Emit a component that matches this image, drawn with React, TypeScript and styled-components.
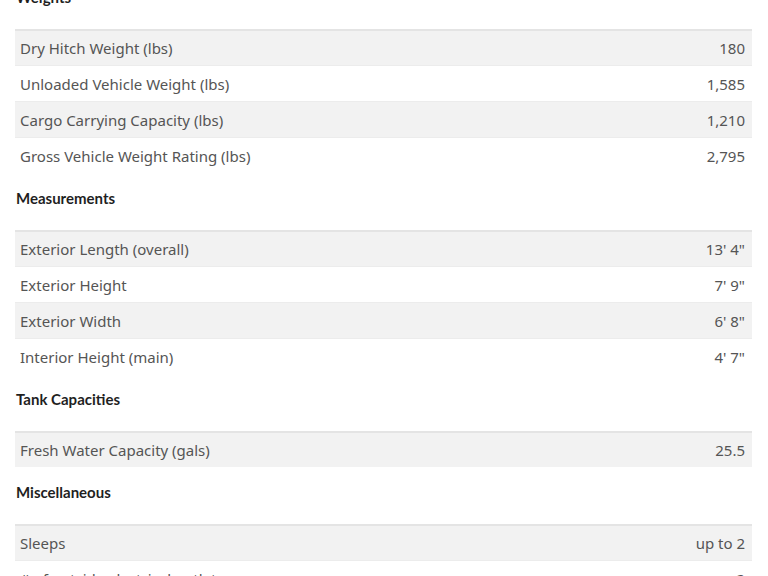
import * as React from "react";
import styled, { createGlobalStyle } from "styled-components";

const GlobalStyle = createGlobalStyle`
    body {
        margin: 0;
        background: #fff;
        font-family: "Noto Sans", "Open Sans", sans-serif;
    }
`;

const Page = styled.div`
    margin-top: -28px;
    padding: 0 16px 0 15px;
`;

const Section = styled.section`
    display: flow-root;
`;

const Heading = styled.h3`
    margin: 15px 0 22px 1px;
    font-family: Lato, "Noto Sans", sans-serif;
    font-weight: 700;
    font-size: 15px;
    line-height: 20px;
    color: #1f1f1f;
`;

const Table = styled.div`
    border-top: 2px solid #e4e4e4;
`;

const Row = styled.div<{ $shaded: boolean }>`
    display: flex;
    justify-content: space-between;
    align-items: center;
    height: 36px;
    box-sizing: border-box;
    padding: 0 7px 0 5px;
    background: ${(p) => (p.$shaded ? "#f2f2f2" : "#fff")};
    border-top: 1px solid #ececec;
    font-size: 15px;
    color: #555;
    &:first-child {
        border-top: none;
        height: 34px;
    }
`;

type Spec = [string, string];

const sections: { title: string; rows: Spec[] }[] = [
    {
        title: "Weights",
        rows: [
            ["Dry Hitch Weight (lbs)", "180"],
            ["Unloaded Vehicle Weight (lbs)", "1,585"],
            ["Cargo Carrying Capacity (lbs)", "1,210"],
            ["Gross Vehicle Weight Rating (lbs)", "2,795"],
        ],
    },
    {
        title: "Measurements",
        rows: [
            ["Exterior Length (overall)", "13' 4\""],
            ["Exterior Height", "7' 9\""],
            ["Exterior Width", "6' 8\""],
            ["Interior Height (main)", "4' 7\""],
        ],
    },
    {
        title: "Tank Capacities",
        rows: [["Fresh Water Capacity (gals)", "25.5"]],
    },
    {
        title: "Miscellaneous",
        rows: [
            ["Sleeps", "up to 2"],
            ["# of outside electrical outlets", "2"],
        ],
    },
];

export default function App() {
    return (
        <>
            <GlobalStyle />
            <Page>
                {sections.map((s) => (
                    <Section key={s.title}>
                        <Heading>{s.title}</Heading>
                        <Table>
                            {s.rows.map(([label, value], i) => (
                                <Row key={label} $shaded={i % 2 === 0}>
                                    <span>{label}</span>
                                    <span>{value}</span>
                                </Row>
                            ))}
                        </Table>
                    </Section>
                ))}
            </Page>
        </>
    );
}
